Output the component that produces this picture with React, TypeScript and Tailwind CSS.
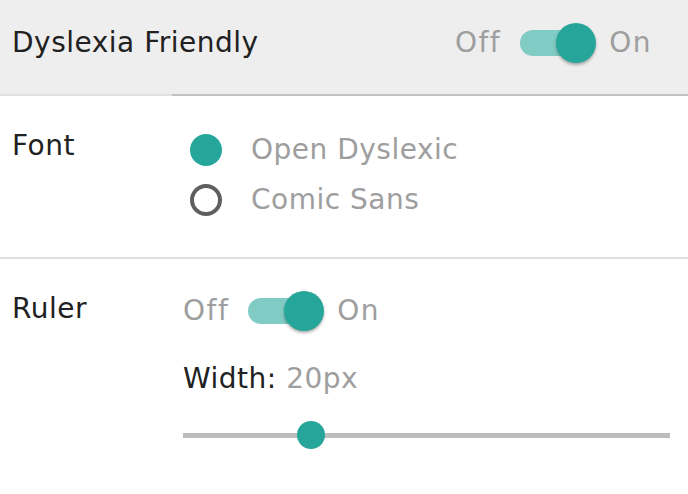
import { type FC } from 'react';

const Toggle: FC<{ on?: boolean }> = ({ on = true }) => (
  <div className="flex items-center tracking-[1.5px] text-[#9e9e9e]">
    <span className="leading-[32px]">Off</span>
    <div className="relative ml-[19px] mr-[13px] h-[40px] w-[76px]">
      <div className="absolute left-0 top-[7px] h-[26px] w-[68px] rounded-full bg-[#80cbc4]" />
      <div
        className={`absolute top-0 h-[40px] w-[40px] rounded-full bg-[#26a69a] shadow-[0_2px_3px_rgba(0,0,0,0.3)] ${
          on ? 'right-0' : 'left-0'
        }`}
      />
    </div>
    <span className="leading-[32px]">On</span>
  </div>
);

const Radio: FC<{ label: string; checked?: boolean }> = ({ label, checked }) => (
  <div className="flex h-[50px] items-center">
    {checked ? (
      <div className="ml-[7px] h-[32px] w-[32px] rounded-full bg-[#26a69a]" />
    ) : (
      <div className="ml-[7px] h-[32px] w-[32px] rounded-full border-[4px] border-[#5f5f5f]" />
    )}
    <span className="ml-[29px] leading-[32px] text-[#9e9e9e]">{label}</span>
  </div>
);

const App: FC = () => {
  const value = 20;
  const pct = ((value - 0) / 76) * 100;

  return (
    <div
      className="h-[494px] w-[688px] overflow-hidden bg-white text-[28px] tracking-[0.5px] text-[#212121]"
      style={{ fontFamily: '"DejaVu Sans", "Liberation Sans", sans-serif' }}
    >
      <header className="bg-[#eeeeee]">
        <div className="flex h-[94px] items-center justify-between pb-[8px] pl-3 pr-[36px]">
          <h1 className="leading-[32px]">Dyslexia Friendly</h1>
          <Toggle />
        </div>
        <div className="flex h-[2px]">
          <div className="w-[172px] bg-[#e0e0e0]" />
          <div className="flex-1 bg-[#c2c2c2]" />
        </div>
      </header>

      <section className="flex pb-[32px] pt-[29px]">
        <div className="w-[183px] shrink-0 pl-3 pt-[5px] leading-[32px]">Font</div>
        <div className="flex flex-col">
          <Radio label="Open Dyslexic" checked />
          <Radio label="Comic Sans" />
        </div>
      </section>

      <div className="h-[2px] bg-[#e0e0e0]" />

      <section className="flex pt-[32px]">
        <div className="w-[183px] shrink-0 pl-3 pt-[2px] leading-[32px]">Ruler</div>
        <div className="flex flex-1 flex-col pr-[18px]">
          <Toggle />
          <div className="mt-[32px] leading-[32px]">
            Width: <span className="text-[#9e9e9e]">{value}px</span>
          </div>
          <div className="relative mt-[26px] h-[28px]">
            <div className="absolute left-0 right-0 top-[12px] h-[5px] bg-[#bdbdbd]" />
            <div
              className="absolute top-0 h-[28px] w-[28px] -translate-x-1/2 rounded-full bg-[#26a69a]"
              style={{ left: `${pct}%` }}
            />
          </div>
        </div>
      </section>
    </div>
  );
};

export default App;
